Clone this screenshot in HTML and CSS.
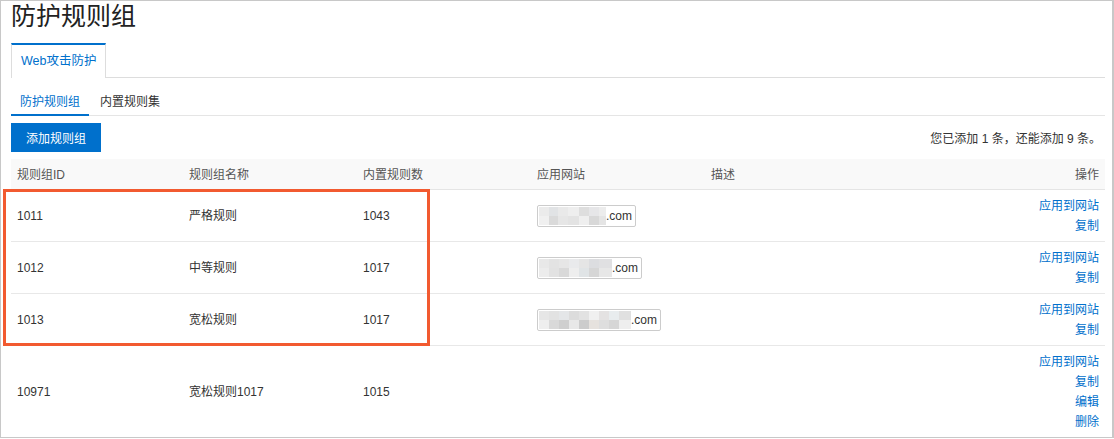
FILE: index.html
```html
<!DOCTYPE html>
<html lang="zh-CN">
<head>
<meta charset="utf-8">
<title>防护规则组</title>
<link rel="stylesheet" href="styles.css">
</head>
<body>
<div class="frame">
  <h1 class="title">防护规则组</h1>
  <div class="tabs">
    <div class="tab active">Web攻击防护</div>
  </div>
  <div class="subtabs">
    <div class="subtab active">防护规则组</div>
    <div class="subtab">内置规则集</div>
  </div>
  <div class="toolbar">
    <button class="btn-primary">添加规则组</button>
    <span class="quota">您已添加 1 条，还能添加 9 条。</span>
  </div>
  <table class="grid">
    <colgroup>
      <col class="c1"><col class="c2"><col class="c3"><col class="c4"><col><col class="c6">
    </colgroup>
    <thead>
      <tr><th>规则组ID</th><th>规则组名称</th><th>内置规则数</th><th>应用网站</th><th>描述</th><th class="right">操作</th></tr>
    </thead>
    <tbody>
      <tr>
        <td>1011</td><td>严格规则</td><td>1043</td>
        <td><span class="site"><span class="blur w67"></span>.com</span></td>
        <td></td>
        <td class="right"><a>应用到网站</a><br><a>复制</a></td>
      </tr>
      <tr>
        <td>1012</td><td>中等规则</td><td>1017</td>
        <td><span class="site"><span class="blur b2 w73"></span>.com</span></td>
        <td></td>
        <td class="right"><a>应用到网站</a><br><a>复制</a></td>
      </tr>
      <tr>
        <td>1013</td><td>宽松规则</td><td>1017</td>
        <td><span class="site"><span class="blur b3 w92"></span>.com</span></td>
        <td></td>
        <td class="right"><a>应用到网站</a><br><a>复制</a></td>
      </tr>
      <tr>
        <td>10971</td><td>宽松规则1017</td><td>1015</td>
        <td></td>
        <td></td>
        <td class="right"><a>应用到网站</a><br><a>复制</a><br><a>编辑</a><br><a>删除</a></td>
      </tr>
    </tbody>
  </table>
  <div class="highlight"></div>
</div>
</body>
</html>
```

FILE: styles.css
```css
* { box-sizing: border-box; }
html, body { margin: 0; padding: 0; background: #fff; }
body {
  font-family: "Liberation Sans", "Noto Sans CJK SC", sans-serif;
  font-size: 12px;
  color: #333;
}
.frame {
  position: relative;
  width: 1114px;
  height: 438px;
  border: 1px solid #c8c8c8;
  border-right-width: 2px;
  padding: 0 7px 0 10px;
  overflow: hidden;
}
.title {
  margin: 0;
  font-size: 25px;
  font-weight: normal;
  line-height: 30px;
  color: #222;
  letter-spacing: 0;
}
.tabs {
  display: flex;
  margin-top: 12px;
  border-bottom: 1px solid #ddd;
}
.tab {
  width: 95px;
  height: 35px;
  line-height: 33px;
  padding: 0 0 0 9px;
  border-top: 2px solid #0070cc;
  border-left: 1px solid #ddd;
  border-right: 1px solid #ddd;
  margin-bottom: -1px;
  background: #fff;
  color: #0070cc;
  font-size: 12.5px;
  white-space: nowrap;
}
.subtabs {
  display: flex;
  margin-top: 12px;
  border-bottom: 1px solid #e5e5e5;
}
.subtab {
  line-height: 24px;
  padding: 0 9px;
  border-bottom: 2px solid transparent;
  margin-bottom: -1px;
  color: #333;
}
.subtab + .subtab { margin-left: 2px; }
.subtab.active {
  border-bottom-color: #0070cc;
  color: #0070cc;
}
.toolbar {
  display: flex;
  align-items: center;
  justify-content: space-between;
  margin-top: 7px;
  padding-right: 4px;
}
.btn-primary {
  width: 90px;
  height: 29px;
  border: 0;
  padding: 0;
  background: #0070cc;
  color: #fff;
  font-family: inherit;
  font-size: 12px;
}
.quota { color: #333; }
.grid {
  width: 100%;
  margin-top: 7px;
  border-collapse: collapse;
  table-layout: fixed;
}
.c1 { width: 172px; }
.c2, .c3, .c4 { width: 174px; }
.c6 { width: 160px; }
.grid th {
  height: 30px;
  padding: 0 6px;
  background: #f9f9f9;
  border-bottom: 1px solid #e5e5e5;
  color: #555;
  font-weight: normal;
  text-align: left;
}
.grid td {
  padding: 6px 6px 5px 6px;
  line-height: 20px;
  border-bottom: 1px solid #e8e8e8;
  vertical-align: middle;
  height: 52px;
}
.grid .right { text-align: right; }
.grid a { color: #0070cc; text-decoration: none; }
.site {
  display: inline-flex;
  align-items: center;
  height: 22px;
  padding: 0 3px 0 1px;
  border: 1px solid #ccc;
  border-radius: 2px;
  line-height: 18px;
  vertical-align: middle;
}
.blur {
  display: inline-block;
  height: 18px;
  background-repeat: no-repeat;
  background-size: 100% 9px, 100% 9px;
  background-position: 0 0, 0 9px;
  background-image:
    linear-gradient(90deg, #ebebeb 0 10px, #e1e3e5 10px 19px, #e9e9e9 19px 29px, #eeeeee 29px 40px, #dedede 40px 50px, #e6e6e8 50px 60px, #ececec 60px 100px),
    linear-gradient(90deg, #f0f0f0 0 10px, #dadada 10px 19px, #e6e6e6 19px 29px, #e3e3e3 29px 40px, #efefef 40px 50px, #d8d8d8 50px 60px, #e4e4e4 60px 100px);
}
.blur.b2 {
  background-image:
    linear-gradient(90deg, #e8e8e8 0 10px, #e3e3e3 10px 20px, #e6e6e6 20px 30px, #e9eaec 30px 40px, #e5e5e5 40px 50px, #dcdde0 50px 60px, #e0e0e2 60px 100px),
    linear-gradient(90deg, #ececec 0 10px, #e2e2e2 10px 20px, #d9d9d9 20px 30px, #eeeeee 30px 40px, #e0e4e6 40px 50px, #d6d6d6 50px 60px, #e7e7e7 60px 100px);
}
.blur.b3 {
  background-image:
    linear-gradient(90deg, #e6e6e6 0 10px, #e2e2e2 10px 20px, #e4e6e8 20px 30px, #dcdcdc 30px 40px, #e2e2e2 40px 50px, #f0f0f0 50px 60px, #e4e2e2 60px 70px, #e8ecee 70px 80px, #e0e0e0 80px 100px),
    linear-gradient(90deg, #eeeeee 0 10px, #d9d9d9 10px 20px, #cfcfcf 20px 30px, #e8e8e8 30px 40px, #cccccc 40px 50px, #e6e2de 50px 60px, #dedede 60px 70px, #d6d6d6 70px 80px, #eeeeee 80px 100px);
}
.w67 { width: 67px; }
.w73 { width: 73px; }
.w92 { width: 92px; }
.highlight {
  position: absolute;
  left: 2px;
  top: 188px;
  width: 427px;
  height: 157px;
  border: 3px solid #f25a30;
  pointer-events: none;
}
```
